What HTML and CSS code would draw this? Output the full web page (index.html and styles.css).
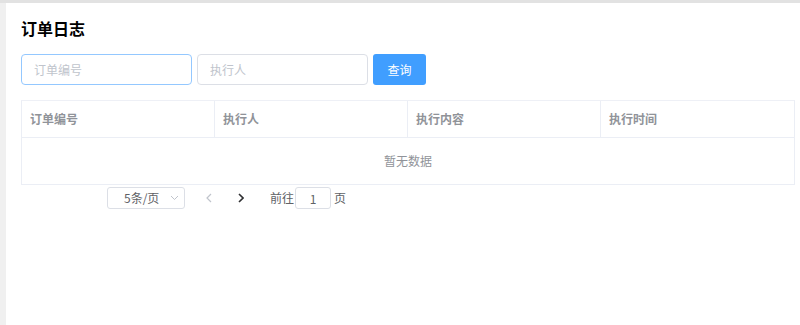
FILE: index.html
```html
<!DOCTYPE html>
<html lang="zh-CN">
<head>
    <meta charset="UTF-8">
    <meta name="viewport" content="width=device-width, initial-scale=1.0">
    <title>订单日志</title>
    <link rel="stylesheet" href="styles.css">
</head>
<body>
    <div class="page">
        <h1 class="title">订单日志</h1>

        <div class="search-bar">
            <input class="field field-active" type="text" placeholder="订单编号">
            <input class="field" type="text" placeholder="执行人">
            <button class="btn-primary">查询</button>
        </div>

        <div class="table">
            <div class="table-head">
                <div class="th">订单编号</div>
                <div class="th">执行人</div>
                <div class="th">执行内容</div>
                <div class="th">执行时间</div>
            </div>
            <div class="table-empty">暂无数据</div>
        </div>

        <div class="pagination">
            <div class="page-size">
                <span>5条/页</span>
                <svg class="caret" width="9" height="6" viewBox="0 0 9 6"><path d="M1 1l3.5 3.5L8 1" fill="none" stroke="currentColor" stroke-width="1"/></svg>
            </div>
            <button class="page-btn disabled">
                <svg width="6" height="10" viewBox="0 0 6 10"><path d="M5 1L1 5l4 4" fill="none" stroke="currentColor" stroke-width="1.2"/></svg>
            </button>
            <button class="page-btn next">
                <svg width="6" height="10" viewBox="0 0 6 10"><path d="M1 1l4 4-4 4" fill="none" stroke="currentColor" stroke-width="1.6"/></svg>
            </button>
            <span class="jump-label">前往</span>
            <input class="jump-input" type="text" value="1">
            <span class="jump-unit">页</span>
        </div>
    </div>
</body>
</html>
```

FILE: styles.css
```css
body {
    margin: 0;
    background: #f0f0f0;
    border-top: 3px solid #e2e2e2;
    font-family: "Noto Sans CJK SC", "Noto Sans", sans-serif;
}
.page {
    margin-left: 6px;
    min-height: calc(100vh - 3px);
    background: #fff;
    padding: 14px 5px 0 15px;
    box-sizing: border-box;
}
.title {
    margin: 0;
    font-size: 16px;
    line-height: 22px;
    font-weight: bold;
    color: #000;
}
.search-bar {
    display: flex;
    gap: 5px;
    margin-top: 15px;
}
.field {
    width: 171px;
    height: 31px;
    box-sizing: border-box;
    border: 1px solid #dcdfe6;
    border-radius: 4px;
    padding: 0 12px;
    font-family: inherit;
    font-size: 12px;
    color: #606266;
    outline: none;
}
.field::placeholder { color: #c0c4cc; }
.field-active { border-color: #94c8ff; }
.btn-primary {
    width: 53px;
    height: 31px;
    border: none;
    border-radius: 3px;
    background: #409eff;
    color: #fff;
    font-family: inherit;
    font-size: 12px;
}
.table {
    margin-top: 15px;
    border: 1px solid #ebeef5;
    border-top-color: #eef0f6;
}
.table-head {
    display: grid;
    grid-template-columns: repeat(4, 1fr);
    border-bottom: 1px solid #ebeef5;
}
.th {
    height: 36px;
    line-height: 36px;
    padding-left: 8px;
    border-right: 1px solid #ebeef5;
    font-size: 12px;
    font-weight: 600;
    color: #909399;
}
.th:last-child { border-right: none; }
.table-empty {
    height: 46px;
    line-height: 46px;
    text-align: center;
    font-size: 12px;
    color: #909399;
}
.pagination {
    display: flex;
    align-items: center;
    margin-top: 2px;
    height: 22px;
    font-size: 12px;
    line-height: 20px;
    color: #606266;
}
.page-size {
    margin-left: 86px;
    width: 78px;
    height: 22px;
    box-sizing: border-box;
    border: 1px solid #dcdfe6;
    border-radius: 3px;
    display: flex;
    align-items: center;
    justify-content: space-between;
    padding: 0 5px 0 16px;
}
.caret { color: #c0c4cc; }
.page-btn {
    width: 24px;
    height: 22px;
    padding: 0;
    border: none;
    background: none;
    display: flex;
    align-items: center;
    justify-content: center;
    color: #303133;
}
.page-btn:first-of-type { margin-left: 12px; }
.page-btn.disabled { color: #c0c4cc; }
.page-btn.next { margin-left: 8px; }
.jump-label { margin-left: 17px; }
.jump-input {
    margin-left: 1px;
    width: 36px;
    height: 22px;
    box-sizing: border-box;
    border: 1px solid #dcdfe6;
    border-radius: 3px;
    text-align: center;
    font-family: inherit;
    font-size: 12px;
    color: #606266;
    outline: none;
}
.jump-unit { margin-left: 3px; }
```
